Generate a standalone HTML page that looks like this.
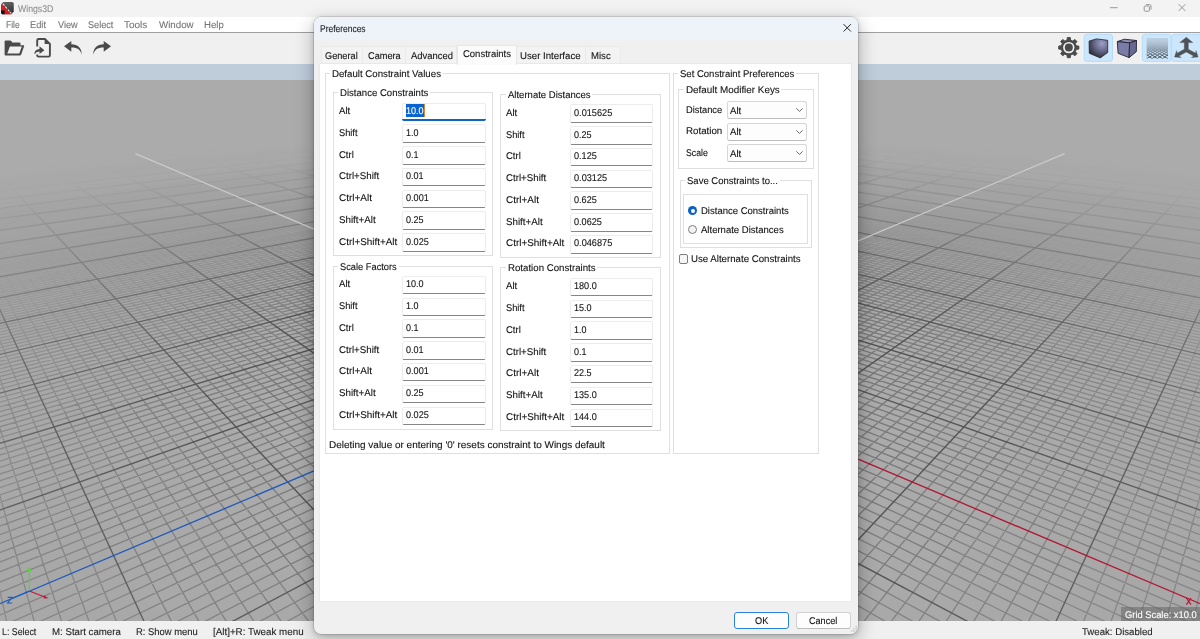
<!DOCTYPE html><html><head><meta charset="utf-8"><title>Wings3D</title><style>
*{box-sizing:border-box;margin:0;padding:0}
html,body{width:1200px;height:639px;overflow:hidden;background:#f0f0f0;font-family:"Liberation Sans",sans-serif;}
.t{position:absolute;white-space:nowrap;transform-origin:0 50%;display:block;-webkit-text-stroke:0.1px currentColor;text-rendering:geometricPrecision}
.abs{position:absolute}
#titlebar{left:0;top:0;width:1200px;height:17px;background:#f3f3f3}
#menubar{left:0;top:17px;width:1200px;height:15.5px;background:#fff}
#menuline{left:0;top:32px;width:1200px;height:1.3px;background:#9f9f9f}
#toolbar{left:0;top:33.3px;width:1200px;height:31px;background:#f0f0f0}
#strip{left:0;top:64px;width:1200px;height:16px;background:#bfccda}
.vp{position:absolute;left:0;top:80px}
#status{left:0;top:621px;width:1200px;height:18px;background:#f0f0f0}
#gscale{left:1121px;top:606.8px;width:79px;height:14.2px;background:rgba(96,96,96,.5)}
#dlg{left:314px;top:17px;width:544.2px;height:616.6px;background:#f0f0f0;border-radius:7px;
 box-shadow:0 0 0 0.6px rgba(90,90,90,.32),0 6px 18px 2px rgba(0,0,0,.24),0 1px 5px rgba(0,0,0,.16);overflow:hidden}
#dtitle{left:0;top:0;width:100%;height:22.5px;background:#eef3fa}
.tab{position:absolute;top:46.4px;height:17.6px;background:#f3f3f3;border:1px solid #eaeaea;border-bottom:none}
.tabsel{position:absolute;top:44.9px;height:19.7px;background:#fbfbfb;border:1px solid #e6e6e6;border-bottom:none}
#pagebox{left:319.2px;top:63px;width:532.6px;height:539px;background:#fff;border:1px solid #e9e9e9}
.gb{position:absolute;border:1px solid #dfdfdf;}
.gl{position:absolute;background:#fff;height:10px}
.in{position:absolute;height:18.6px;width:83.5px;background:#fff;border:1px solid #ececec;border-bottom:1.3px solid #868686;border-radius:2px}
.cb{position:absolute;height:18.2px;width:79.5px;background:#fdfdfd;border:1px solid #d6d6d6;border-bottom-color:#bdbdbd;border-radius:2.5px}
.btn{position:absolute;height:16.5px;border-radius:3px;background:#fdfdfd;border:1px solid #d2d2d2;border-bottom-color:#bbb}
</style></head><body>
<div id="titlebar" class="abs"></div>
<svg class="abs" style="left:0;top:0" width="16" height="16" viewBox="0 0 16 16">
<defs><linearGradient id="ig" x1="0" y1="0" x2="0.3" y2="1"><stop offset="0" stop-color="#6a6a6a"/><stop offset="1" stop-color="#363636"/></linearGradient></defs>
<path d="M3.2 1.9H12.4L13.75 3.3V11.6L11.3 14.25H2.2L1 13V4.6Z" fill="url(#ig)"/>
<path d="M1 4.8L2.7 4.4L5 7.6V8.7H7L7.7 11.8H10L11.6 13.3L11 14.25H4.6V10.6H1Z" fill="#e8151b"/>
<path d="M1 10.6H4.6V14.25H2.2L1 13Z" fill="#141414"/>
<path d="M2.9 3.9l1.5 1.7m.9 1.1l1.6 1.8m1 1.1l1.5 1.7m.8.9l1 1.1" stroke="#e4ecee" stroke-width="1.1" fill="none"/>
</svg>
<span class="t" style="left:18.2px;top:4px;font-size:9.8px;line-height:11px;height:11px;color:#8f8f8f;transform:scaleX(0.8883);">Wings3D</span>
<svg class="abs" style="left:1100px;top:0" width="100" height="17" viewBox="1100 0 100 17" fill="none" stroke="#8d8d8d" stroke-width="0.9">
<path d="M1110 7.7h7.6"/>
<rect x="1144.2" y="6" width="5.2" height="5.2" rx="1"/><path d="M1146 4.6h3.6q1.4 0 1.4 1.4v3.5"/>
<path d="M1178.6 4.2l6.8 6.8m0-6.8l-6.8 6.8"/></svg>
<div id="menubar" class="abs"></div><div id="menuline" class="abs"></div>
<span class="t" style="left:5.5px;top:20px;font-size:9.8px;line-height:11px;height:11px;color:#757575;transform:scaleX(0.8683);">File</span>
<span class="t" style="left:30.3px;top:20px;font-size:9.8px;line-height:11px;height:11px;color:#757575;transform:scaleX(0.9465);">Edit</span>
<span class="t" style="left:57.5px;top:20px;font-size:9.8px;line-height:11px;height:11px;color:#757575;transform:scaleX(0.9350);">View</span>
<span class="t" style="left:88.0px;top:20px;font-size:9.8px;line-height:11px;height:11px;color:#757575;transform:scaleX(0.9286);">Select</span>
<span class="t" style="left:124.2px;top:20px;font-size:9.8px;line-height:11px;height:11px;color:#757575;transform:scaleX(1.0182);">Tools</span>
<span class="t" style="left:158.7px;top:20px;font-size:9.8px;line-height:11px;height:11px;color:#757575;transform:scaleX(0.9917);">Window</span>
<span class="t" style="left:204.3px;top:20px;font-size:9.8px;line-height:11px;height:11px;color:#757575;transform:scaleX(0.9782);">Help</span>
<div id="toolbar" class="abs"></div>
<svg class="abs" style="left:0;top:33px" width="1200" height="31" viewBox="0 33 1200 31">
<defs>
<radialGradient id="c1" gradientUnits="userSpaceOnUse" cx="1102" cy="43.5" r="15"><stop offset="0" stop-color="#a0a0c8"/><stop offset=".45" stop-color="#6d6d90"/><stop offset="1" stop-color="#2b2b36"/></radialGradient>
<linearGradient id="gi" x1="0" y1="0" x2="0" y2="1"><stop offset="0" stop-color="#b9cbdd"/><stop offset=".45" stop-color="#b4c8dc" stop-opacity=".75"/><stop offset="1" stop-color="#c4dcf0" stop-opacity=".2"/></linearGradient>
<linearGradient id="gm" gradientUnits="userSpaceOnUse" x1="0" y1="41" x2="0" y2="59"><stop offset="0" stop-color="#fff" stop-opacity="0"/><stop offset=".3" stop-color="#fff" stop-opacity=".22"/><stop offset="1" stop-color="#fff" stop-opacity="1"/></linearGradient>
<mask id="mm"><rect x="1140" y="34" width="34" height="28" fill="url(#gm)"/></mask>
<clipPath id="gc"><rect x="1146.7" y="38.2" width="21.3" height="20.4"/></clipPath>
</defs>
<g fill="#4a4a4a">
<path fill-rule="evenodd" d="M4.6 41.6q0-1.1 1.1-1.1h4.5q.6 0 1 .5l1.2 1.5h7q1.1 0 1.1 1.1v1.6h2.8q1.2 0 .8 1.1l-2.9 8.2q-.4 1-1.4 1H5.7q-1.1 0-1.1-1.1ZM9.9 46.6L7.3 53.5H19.3L21.8 46.6Z"/>
</g>
<g fill="none" stroke="#4a4a4a" stroke-width="1.9" stroke-linejoin="round">
<path d="M37.2 46.6V40.4q0-1.4 1.4-1.4h6.3l5 5V55.2q0 1.4-1.4 1.4H38.6q-1.4 0-1.4-1.4V54.6"/>
</g>
<path d="M44.6 38.6v5.4h5.4Z" fill="#4a4a4a"/>
<path d="M34.3 54.4q.1-5.2 5.2-5.5V46.3l4.9 3.9-4.9 3.9V51.6q-3.2-.1-5.2 2.8Z" fill="#4a4a4a"/>
<path d="M64 46.3L71.3 40.9V44.3C77.8 44.3 81.9 47.8 81.7 54.9C80.9 50 77.6 47.5 71.3 47.5V51.7Z" fill="#4a4a4a"/>
<path d="M111 46.3L103.7 40.9V44.3C97.2 44.3 93.1 47.8 93.3 54.9C94.1 50 97.4 47.5 103.7 47.5V51.7Z" fill="#4a4a4a"/>
<!-- gear -->
<path d="M1076.29 45.80L1078.89 46.08L1078.89 49.12L1076.29 49.40L1075.37 51.62L1077.00 53.66L1074.86 55.80L1072.82 54.17L1070.60 55.09L1070.32 57.69L1067.28 57.69L1067.00 55.09L1064.78 54.17L1062.74 55.80L1060.60 53.66L1062.23 51.62L1061.31 49.40L1058.71 49.12L1058.71 46.08L1061.31 45.80L1062.23 43.58L1060.60 41.54L1062.74 39.40L1064.78 41.03L1067.00 40.11L1067.28 37.51L1070.32 37.51L1070.60 40.11L1072.82 41.03L1074.86 39.40L1077.00 41.54L1075.37 43.58Z" fill="#4a4a4a" stroke="#4a4a4a" stroke-width="0.9" stroke-linejoin="round"/>
<circle cx="1068.8" cy="47.6" r="5.7" fill="#f0f0f0"/><circle cx="1068.8" cy="47.6" r="4.0" fill="#4a4a4a"/>
<!-- selected backgrounds -->
<g fill="#cce6fb" stroke="#b2dafa" stroke-width="0.9">
<rect x="1084.2" y="34.3" width="28.3" height="27.1" rx="2.5"/>
<rect x="1142.3" y="34.3" width="28.8" height="27.1" rx="2.5"/>
<rect x="1171.6" y="34.3" width="30" height="27.1" rx="2.5"/>
</g>
<!-- smooth cube -->
<path d="M1089.1 41.1L1096.5 38.9L1107.7 40.3L1107.7 52.5L1100.3 57.9L1089.3 53.3Z" fill="url(#c1)" stroke="#24242d" stroke-width="0.8" stroke-linejoin="round"/>
<!-- flat cube -->
<g stroke="#24242e" stroke-width="0.9" stroke-linejoin="round">
<path d="M1117.3 41.6L1124.3 39.2L1136.5 40.5L1129.6 42.9Z" fill="#8b8bb6"/>
<path d="M1117.3 41.6L1129.6 42.9L1129.1 57.6L1118.1 53.3Z" fill="#7b7ba7"/>
<path d="M1129.6 42.9L1136.5 40.5L1136.3 51.7L1129.1 57.6Z" fill="#686890"/>
</g>
<!-- grid icon -->
<rect x="1146.7" y="38.2" width="21.3" height="20.4" fill="url(#gi)"/>
<g clip-path="url(#gc)"><path d="M1174.8 27.7L1486.6 61.1M1140.2 27.8L833.6 61.1M1174.4 27.8L1481.0 61.1M1140.6 27.9L839.2 61.1M1174.0 27.9L1475.4 61.1M1140.9 28.0L844.9 61.1M1173.7 28.0L1469.7 61.1M1141.3 28.1L850.5 61.1M1173.3 28.1L1464.1 61.1M1141.7 28.1L856.1 61.1M1172.9 28.1L1458.5 61.1M1142.1 28.2L861.7 61.1M1172.5 28.2L1452.9 61.1M1142.5 28.3L867.3 61.1M1172.1 28.3L1447.3 61.1M1143.0 28.4L872.9 61.1M1171.6 28.4L1441.7 61.1M1143.4 28.5L878.6 61.1M1171.2 28.5L1436.0 61.1M1143.8 28.6L884.2 61.1M1170.8 28.6L1430.4 61.1M1144.3 28.7L889.8 61.1M1170.3 28.7L1424.8 61.1M1144.7 28.8L895.4 61.1M1169.9 28.8L1419.2 61.1M1145.2 28.9L901.0 61.1M1169.4 28.9L1413.6 61.1M1145.7 29.0L906.6 61.1M1168.9 29.0L1408.0 61.1M1146.2 29.1L912.3 61.1M1168.4 29.1L1402.3 61.1M1146.7 29.2L917.9 61.1M1167.9 29.2L1396.7 61.1M1147.2 29.3L923.5 61.1M1167.4 29.3L1391.1 61.1M1147.7 29.4L929.1 61.1M1166.9 29.4L1385.5 61.1M1148.2 29.5L934.7 61.1M1166.4 29.5L1379.9 61.1M1148.8 29.6L940.3 61.1M1165.8 29.6L1374.3 61.1M1149.3 29.7L946.0 61.1M1165.3 29.7L1368.6 61.1M1149.9 29.8L951.6 61.1M1164.7 29.8L1363.0 61.1M1150.5 29.9L957.2 61.1M1164.1 29.9L1357.4 61.1M1151.1 30.1L962.8 61.1M1163.5 30.1L1351.8 61.1M1151.7 30.2L968.4 61.1M1162.9 30.2L1346.2 61.1M1152.4 30.3L974.0 61.1M1162.2 30.3L1340.6 61.1M1153.0 30.5L979.7 61.1M1161.6 30.5L1334.9 61.1M1153.7 30.6L985.3 61.1M1160.9 30.6L1329.3 61.1M1154.4 30.7L990.9 61.1M1160.2 30.7L1323.7 61.1M1155.1 30.9L996.5 61.1M1159.5 30.9L1318.1 61.1M1155.8 31.0L1002.1 61.1M1158.8 31.0L1312.5 61.1M1156.5 31.2L1007.7 61.1M1158.1 31.2L1306.9 61.1M1157.3 31.4L1013.4 61.1M1157.3 31.4L1301.2 61.1M1158.1 31.5L1019.0 61.1M1156.5 31.5L1295.6 61.1M1158.9 31.7L1024.6 61.1M1155.7 31.7L1290.0 61.1M1159.7 31.9L1030.2 61.1M1154.9 31.9L1284.4 61.1M1160.6 32.0L1035.8 61.1M1154.0 32.0L1278.8 61.1M1161.5 32.2L1041.4 61.1M1153.1 32.2L1273.2 61.1M1162.4 32.4L1047.1 61.1M1152.2 32.4L1267.5 61.1M1163.3 32.6L1052.7 61.1M1151.3 32.6L1261.9 61.1M1164.3 32.8L1058.3 61.1M1150.3 32.8L1256.3 61.1M1165.3 33.0L1063.9 61.1M1149.3 33.0L1250.7 61.1M1166.3 33.2L1069.5 61.1M1148.3 33.2L1245.1 61.1M1167.4 33.4L1075.2 61.1M1147.2 33.4L1239.4 61.1M1168.5 33.7L1080.8 61.1M1146.1 33.7L1233.8 61.1M1169.7 33.9L1086.4 61.1M1144.9 33.9L1228.2 61.1M1170.8 34.1L1092.0 61.1M1143.8 34.1L1222.6 61.1M1172.1 34.4L1097.6 61.1M1142.5 34.4L1217.0 61.1M1173.3 34.7L1103.2 61.1M1141.3 34.7L1211.4 61.1M1174.7 34.9L1108.9 61.1M1139.9 34.9L1205.7 61.1M1176.0 35.2L1114.5 61.1M1138.6 35.2L1200.1 61.1M1177.5 35.5L1120.1 61.1M1137.1 35.5L1194.5 61.1M1178.9 35.8L1125.7 61.1M1135.7 35.8L1188.9 61.1M1180.5 36.1L1131.3 61.1M1134.1 36.1L1183.3 61.1M1182.1 36.5L1136.9 61.1M1132.5 36.5L1177.7 61.1M1183.7 36.8L1142.6 61.1M1130.9 36.8L1172.0 61.1M1185.5 37.2L1148.2 61.1M1129.1 37.2L1166.4 61.1M1187.3 37.5L1153.8 61.1M1127.3 37.5L1160.8 61.1M1189.2 37.9L1159.4 61.1M1125.4 37.9L1155.2 61.1M1191.2 38.3L1165.0 61.1M1123.4 38.3L1149.6 61.1M1193.3 38.8L1170.6 61.1M1121.3 38.8L1144.0 61.1" fill="none" stroke="#3d434a" stroke-width="1" mask="url(#mm)"/></g>
<!-- axes icon -->
<g fill="#4f5357" stroke="#4f5357" stroke-width="0.4" stroke-linejoin="round">
<path d="M1186.3 37.3L1192.8 42.6H1188.3V49.2L1195.6 53.2L1196 50.7L1198.1 57L1191.4 57.5L1193.7 56L1186.3 52L1178.9 56L1181.2 57.5L1174.5 57L1176.6 50.7L1177 53.2L1184.3 49.2V42.6H1179.8Z"/>
</g>
</svg>
<div id="strip" class="abs"></div>
<svg class="vp" width="1200" height="541" viewBox="0 80 1200 541">
<rect x="0" y="80" width="1200" height="541" fill="#ababab"/>
<path d="M601.5 108.0L-4.0 161.3M598.5 108.0L1204.0 161.3M603.0 108.2L-4.0 161.8M597.0 108.2L1204.0 161.8M604.6 108.3L-4.0 162.3M595.4 108.3L1204.0 162.3M606.1 108.4L-4.0 162.8M593.9 108.4L1204.0 162.8M607.6 108.6L-4.0 163.3M592.4 108.6L1204.0 163.3M609.2 108.7L-4.0 163.8M590.8 108.7L1204.0 163.8M610.7 108.9L-4.0 164.3M589.3 108.9L1204.0 164.3M612.3 109.0L-4.0 164.9M587.7 109.0L1204.0 164.9M613.8 109.1L-4.0 165.4M586.2 109.1L1204.0 165.4M617.0 109.4L-4.0 166.4M583.0 109.4L1204.0 166.4M618.6 109.5L-4.0 167.0M581.4 109.5L1204.0 167.0M620.1 109.7L-4.0 167.5M579.9 109.7L1204.0 167.5M621.7 109.8L-4.0 168.1M578.3 109.8L1204.0 168.1M623.3 110.0L-4.0 168.6M576.7 110.0L1204.0 168.6M625.0 110.1L-4.0 169.2M575.0 110.1L1204.0 169.2M626.6 110.2L-4.0 169.7M573.4 110.2L1204.0 169.7M628.2 110.4L-4.0 170.3M571.8 110.4L1204.0 170.3M629.8 110.5L-4.0 170.9M570.2 110.5L1204.0 170.9M633.1 110.8L-4.0 172.0M566.9 110.8L1204.0 172.0M634.8 111.0L-4.0 172.6M565.2 111.0L1204.0 172.6M636.4 111.1L-4.0 173.2M563.6 111.1L1204.0 173.2M638.1 111.3L-4.0 173.8M561.9 111.3L1204.0 173.8M639.8 111.4L-4.0 174.4M560.2 111.4L1204.0 174.4M641.4 111.5L-4.0 175.0M558.6 111.5L1204.0 175.0M643.1 111.7L-4.0 175.6M556.9 111.7L1204.0 175.6M644.8 111.8L-4.0 176.2M555.2 111.8L1204.0 176.2M646.5 112.0L-4.0 176.9M553.5 112.0L1204.0 176.9M650.0 112.3L-4.0 178.1M550.0 112.3L1204.0 178.1M651.7 112.4L-4.0 178.8M548.3 112.4L1204.0 178.8M653.4 112.6L-4.0 179.4M546.6 112.6L1204.0 179.4M655.2 112.7L-4.0 180.1M544.8 112.7L1204.0 180.1M656.9 112.9L-4.0 180.7M543.1 112.9L1204.0 180.7M658.7 113.1L-4.0 181.4M541.3 113.1L1204.0 181.4M660.4 113.2L-4.0 182.1M539.6 113.2L1204.0 182.1M662.2 113.4L-4.0 182.8M537.8 113.4L1204.0 182.8M664.0 113.5L-4.0 183.4M536.0 113.5L1204.0 183.4M667.6 113.8L-4.0 184.8M532.4 113.8L1204.0 184.8M669.4 114.0L-4.0 185.6M530.6 114.0L1204.0 185.6M671.2 114.2L-4.0 186.3M528.8 114.2L1204.0 186.3M673.0 114.3L-4.0 187.0M527.0 114.3L1204.0 187.0M674.9 114.5L-4.0 187.7M525.1 114.5L1204.0 187.7M676.7 114.6L-4.0 188.5M523.3 114.6L1204.0 188.5M678.6 114.8L-4.0 189.2M521.4 114.8L1204.0 189.2M680.4 115.0L-4.0 190.0M519.6 115.0L1204.0 190.0M682.3 115.1L-4.0 190.7M517.7 115.1L1204.0 190.7M686.0 115.5L-4.0 192.3M514.0 115.5L1204.0 192.3M687.9 115.6L-4.0 193.1M512.1 115.6L1204.0 193.1M689.8 115.8L-4.0 193.9M510.2 115.8L1204.0 193.9M691.7 116.0L-4.0 194.7M508.3 116.0L1204.0 194.7M693.7 116.1L-4.0 195.5M506.3 116.1L1204.0 195.5M695.6 116.3L-4.0 196.3M504.4 116.3L1204.0 196.3M697.5 116.5L-4.0 197.1M502.5 116.5L1204.0 197.1M699.5 116.6L-4.0 198.0M500.5 116.6L1204.0 198.0M701.4 116.8L-4.0 198.8M498.6 116.8L1204.0 198.8M705.4 117.1L-4.0 200.5M494.6 117.1L1204.0 200.5M707.3 117.3L-4.0 201.4M492.7 117.3L1204.0 201.4M709.3 117.5L-4.0 202.3M490.7 117.5L1204.0 202.3M711.3 117.7L-4.0 203.2M488.7 117.7L1204.0 203.2M713.4 117.8L-4.0 204.1M486.6 117.8L1204.0 204.1M715.4 118.0L-4.0 205.0M484.6 118.0L1204.0 205.0M717.4 118.2L-4.0 206.0M482.6 118.2L1204.0 206.0M719.4 118.4L-4.0 206.9M480.6 118.4L1204.0 206.9M721.5 118.6L-4.0 207.9M478.5 118.6L1204.0 207.9M725.6 118.9L-4.0 209.8M474.4 118.9L1204.0 209.8M727.7 119.1L-4.0 210.8M472.3 119.1L1204.0 210.8M729.8 119.3L-4.0 211.8M470.2 119.3L1204.0 211.8M731.9 119.5L-4.0 212.8M468.1 119.5L1204.0 212.8M734.0 119.7L-4.0 213.8M466.0 119.7L1204.0 213.8M736.1 119.8L-4.0 214.8M463.9 119.8L1204.0 214.8M738.3 120.0L-4.0 215.9M461.7 120.0L1204.0 215.9M740.4 120.2L-4.0 216.9M459.6 120.2L1204.0 216.9M742.6 120.4L-4.0 218.0M457.4 120.4L1204.0 218.0M746.9 120.8L-4.0 220.2M453.1 120.8L1204.0 220.2M749.1 121.0L-4.0 221.3M450.9 121.0L1204.0 221.3M751.3 121.2L-4.0 222.4M448.7 121.2L1204.0 222.4M753.5 121.4L-4.0 223.6M446.5 121.4L1204.0 223.6M755.7 121.6L-4.0 224.7M444.3 121.6L1204.0 224.7M758.0 121.8L-4.0 225.9M442.0 121.8L1204.0 225.9M760.2 122.0L-4.0 227.1M439.8 122.0L1204.0 227.1M762.5 122.2L-4.0 228.3M437.5 122.2L1204.0 228.3M764.7 122.4L-4.0 229.5M435.3 122.4L1204.0 229.5M769.3 122.8L-4.0 232.0M430.7 122.8L1204.0 232.0M771.6 123.0L-4.0 233.3M428.4 123.0L1204.0 233.3M773.9 123.2L-4.0 234.6M426.1 123.2L1204.0 234.6M776.3 123.4L-4.0 235.9M423.7 123.4L1204.0 235.9M778.6 123.6L-4.0 237.2M421.4 123.6L1204.0 237.2M780.9 123.8L-4.0 238.5M419.1 123.8L1204.0 238.5M783.3 124.0L-4.0 239.9M416.7 124.0L1204.0 239.9M785.7 124.2L-4.0 241.3M414.3 124.2L1204.0 241.3M788.1 124.4L-4.0 242.7M411.9 124.4L1204.0 242.7M792.9 124.8L-4.0 245.5M407.1 124.8L1204.0 245.5M795.3 125.0L-4.0 247.0M404.7 125.0L1204.0 247.0M797.8 125.2L-4.0 248.5M402.2 125.2L1204.0 248.5M800.2 125.5L-4.0 250.0M399.8 125.5L1204.0 250.0M802.7 125.7L-4.0 251.5M397.3 125.7L1204.0 251.5M805.1 125.9L-4.0 253.0M394.9 125.9L1204.0 253.0M807.6 126.1L-4.0 254.6M392.4 126.1L1204.0 254.6M810.1 126.3L-4.0 256.2M389.9 126.3L1204.0 256.2M812.7 126.6L-4.0 257.8M387.3 126.6L1204.0 257.8M817.7 127.0L-4.0 261.1M382.3 127.0L1204.0 261.1M820.3 127.2L-4.0 262.8M379.7 127.2L1204.0 262.8M822.9 127.4L-4.0 264.5M377.1 127.4L1204.0 264.5M825.5 127.7L-4.0 266.3M374.5 127.7L1204.0 266.3M828.1 127.9L-4.0 268.1M371.9 127.9L1204.0 268.1M830.7 128.1L-4.0 269.9M369.3 128.1L1204.0 269.9M833.3 128.4L-4.0 271.7M366.7 128.4L1204.0 271.7M836.0 128.6L-4.0 273.6M364.0 128.6L1204.0 273.6M838.6 128.8L-4.0 275.5M361.4 128.8L1204.0 275.5M844.0 129.3L-4.0 279.4M356.0 129.3L1204.0 279.4M846.7 129.5L-4.0 281.4M353.3 129.5L1204.0 281.4M849.4 129.8L-4.0 283.4M350.6 129.8L1204.0 283.4M852.1 130.0L-4.0 285.5M347.9 130.0L1204.0 285.5M854.9 130.3L-4.0 287.6M345.1 130.3L1204.0 287.6M857.7 130.5L-4.0 289.7M342.3 130.5L1204.0 289.7M860.4 130.7L-4.0 291.9M339.6 130.7L1204.0 291.9M863.2 131.0L-4.0 294.1M336.8 131.0L1204.0 294.1M866.0 131.2L-4.0 296.3M334.0 131.2L1204.0 296.3M871.7 131.7L-4.0 301.0M328.3 131.7L1204.0 301.0M874.6 132.0L-4.0 303.4M325.4 132.0L1204.0 303.4M877.5 132.2L-4.0 305.8M322.5 132.2L1204.0 305.8M880.4 132.5L-4.0 308.2M319.6 132.5L1204.0 308.2M883.3 132.7L-4.0 310.8M316.7 132.7L1204.0 310.8M886.2 133.0L-4.0 313.3M313.8 133.0L1204.0 313.3M889.1 133.3L-4.0 315.9M310.9 133.3L1204.0 315.9M892.1 133.5L-4.0 318.6M307.9 133.5L1204.0 318.6M895.1 133.8L-4.0 321.3M304.9 133.8L1204.0 321.3M901.1 134.3L-4.0 326.9M298.9 134.3L1204.0 326.9M904.1 134.6L-4.0 329.8M295.9 134.6L1204.0 329.8M907.2 134.8L-4.0 332.8M292.8 134.8L1204.0 332.8M910.3 135.1L-4.0 335.8M289.7 135.1L1204.0 335.8M913.3 135.4L-4.0 338.9M286.7 135.4L1204.0 338.9M916.5 135.6L-4.0 342.0M283.5 135.6L1204.0 342.0M919.6 135.9L-4.0 345.2M280.4 135.9L1204.0 345.2M922.7 136.2L-4.0 348.5M277.3 136.2L1204.0 348.5M925.9 136.5L-4.0 351.8M274.1 136.5L1204.0 351.8M932.3 137.0L-4.0 358.8M267.7 137.0L1204.0 358.8M935.5 137.3L-4.0 362.4M264.5 137.3L1204.0 362.4M938.7 137.6L-4.0 366.0M261.3 137.6L1204.0 366.0M942.0 137.9L-4.0 369.8M258.0 137.9L1204.0 369.8M945.3 138.2L-4.0 373.6M254.7 138.2L1204.0 373.6M948.6 138.5L-4.0 377.5M251.4 138.5L1204.0 377.5M951.9 138.8L-4.0 381.6M248.1 138.8L1204.0 381.6M955.3 139.0L-4.0 385.7M244.7 139.0L1204.0 385.7M958.6 139.3L-4.0 389.9M241.4 139.3L1204.0 389.9M965.4 139.9L-4.0 398.7M234.6 139.9L1204.0 398.7M968.8 140.2L-4.0 403.2M231.2 140.2L1204.0 403.2M972.3 140.5L-4.0 407.9M227.7 140.5L1204.0 407.9M975.8 140.8L-4.0 412.7M224.2 140.8L1204.0 412.7M979.3 141.2L-4.0 417.7M220.7 141.2L1204.0 417.7M982.8 141.5L-4.0 422.7M217.2 141.5L1204.0 422.7M986.3 141.8L-4.0 427.9M213.7 141.8L1204.0 427.9M989.9 142.1L-4.0 433.3M210.1 142.1L1204.0 433.3M993.4 142.4L-4.0 438.8M206.6 142.4L1204.0 438.8M1000.7 143.0L-4.0 450.2M199.3 143.0L1204.0 450.2M1004.3 143.4L-4.0 456.2M195.7 143.4L1204.0 456.2M1008.0 143.7L-4.0 462.4M192.0 143.7L1204.0 462.4M1011.7 144.0L-4.0 468.7M188.3 144.0L1204.0 468.7M1015.4 144.3L-4.0 475.3M184.6 144.3L1204.0 475.3M1019.2 144.7L-4.0 482.1M180.8 144.7L1204.0 482.1M1023.0 145.0L-4.0 489.0M177.0 145.0L1204.0 489.0M1026.8 145.3L-4.0 496.2M173.2 145.3L1204.0 496.2M1030.6 145.7L-4.0 503.7M169.4 145.7L1204.0 503.7M1038.3 146.3L-4.0 519.3M161.7 146.3L1204.0 519.3M1042.2 146.7L-4.0 527.5M157.8 146.7L1204.0 527.5M1046.2 147.0L-4.0 536.1M153.8 147.0L1204.0 536.1M1050.1 147.4L-4.0 544.9M149.9 147.4L1204.0 544.9M1054.1 147.7L-4.0 554.0M145.9 147.7L1204.0 554.0M1058.1 148.1L-4.0 563.5M141.9 148.1L1204.0 563.5M1062.2 148.4L-4.0 573.4M137.8 148.4L1204.0 573.4M1066.2 148.8L-4.0 583.6M133.8 148.8L1204.0 583.6M1070.3 149.1L-4.0 594.2M129.7 149.1L1204.0 594.2M1078.6 149.9L-4.0 616.8M121.4 149.9L1204.0 616.8M1082.8 150.2L4.5 625.0M117.2 150.2L1195.5 625.0M1087.0 150.6L32.2 625.0M113.0 150.6L1167.8 625.0M1091.2 151.0L59.8 625.0M108.8 151.0L1140.2 625.0M1095.5 151.3L87.4 625.0M104.5 151.3L1112.6 625.0M1099.8 151.7L115.1 625.0M100.2 151.7L1084.9 625.0M1104.1 152.1L142.7 625.0M95.9 152.1L1057.3 625.0M1108.5 152.5L170.3 625.0M91.5 152.5L1029.7 625.0M1112.9 152.9L197.9 625.0M87.1 152.9L1002.1 625.0M1121.7 153.6L253.2 625.0M78.3 153.6L946.8 625.0M1126.2 154.0L280.8 625.0M73.8 154.0L919.2 625.0M1130.7 154.4L308.4 625.0M69.3 154.4L891.6 625.0M1135.3 154.8L336.1 625.0M64.7 154.8L863.9 625.0M1139.9 155.2L363.7 625.0M60.1 155.2L836.3 625.0M1144.5 155.6L391.3 625.0M55.5 155.6L808.7 625.0M1149.1 156.0L418.9 625.0M50.9 156.0L781.1 625.0M1153.8 156.5L446.6 625.0M46.2 156.5L753.4 625.0M1158.5 156.9L474.2 625.0M41.5 156.9L725.8 625.0M1168.1 157.7L529.4 625.0M31.9 157.7L670.6 625.0M1172.9 158.1L557.1 625.0M27.1 158.1L642.9 625.0M1177.8 158.6L584.7 625.0M22.2 158.6L615.3 625.0M1182.7 159.0L612.3 625.0M17.3 159.0L587.7 625.0M1187.6 159.4L639.9 625.0M12.4 159.4L560.1 625.0M1192.6 159.9L667.6 625.0M7.4 159.9L532.4 625.0M1197.6 160.3L695.2 625.0M2.4 160.3L504.8 625.0M1202.7 160.7L722.8 625.0M-2.7 160.7L477.2 625.0M1204.0 165.0L750.4 625.0M-4.0 165.0L449.6 625.0M1204.0 177.8L805.7 625.0M-4.0 177.8L394.3 625.0M1204.0 185.4L833.3 625.0M-4.0 185.4L366.7 625.0M1204.0 193.8L861.0 625.0M-4.0 193.8L339.0 625.0M1204.0 203.3L888.6 625.0M-4.0 203.3L311.4 625.0M1204.0 214.1L916.2 625.0M-4.0 214.1L283.8 625.0M1204.0 226.4L943.8 625.0M-4.0 226.4L256.2 625.0M1204.0 240.7L971.5 625.0M-4.0 240.7L228.5 625.0M1204.0 257.5L999.1 625.0M-4.0 257.5L200.9 625.0M1204.0 277.4L1026.7 625.0M-4.0 277.4L173.3 625.0M1204.0 330.8L1082.0 625.0M-4.0 330.8L118.0 625.0M1204.0 367.9L1109.6 625.0M-4.0 367.9L90.4 625.0M1204.0 416.0L1137.2 625.0M-4.0 416.0L62.8 625.0M1204.0 481.0L1164.8 625.0M-4.0 481.0L35.2 625.0M1204.0 573.6L1192.5 625.0M-4.0 573.6L7.5 625.0" stroke="#797979" stroke-width="1.3" fill="none"/>
<g fill="#ababab" fill-rule="evenodd"><path d="M-10 70H1210V640H-10Z M600 259L619 259L638 260L657 261L675 263L694 265L713 268L731 271L749 275L768 279L785 284L803 290L820 296L837 303L853 311L868 320L883 329L896 339L908 350L919 362L928 374L935 388L939 402L941 417L939 433L934 449L926 465L912 482L894 498L872 514L845 529L813 543L776 554L736 564L692 571L647 576L600 577L553 576L508 571L464 564L424 554L387 543L355 529L328 514L306 498L288 482L274 465L266 449L261 433L259 417L261 402L265 388L272 374L281 362L292 350L304 339L317 329L332 320L347 311L363 303L380 296L397 290L415 284L432 279L451 275L469 271L487 268L506 265L525 263L543 261L562 260L581 259Z" fill-opacity="0.069"/><path d="M-10 70H1210V640H-10Z M481 644L424 634L372 619L325 602L286 583L253 561L227 539L208 517L195 495L188 473L185 452L187 432L192 413L201 396L212 379L225 364L240 350L256 338L273 326L292 315L311 306L330 297L350 289L370 282L391 276L412 271L432 266L453 262L474 258L495 255L516 253L537 251L558 250L579 249L600 248L621 249L642 250L663 251L684 253L705 255L726 258L747 262L768 266L788 271L809 276L830 282L850 289L870 297L889 306L908 315L927 326L944 338L960 350L975 364L988 379L999 396L1008 413L1013 432L1015 452L1012 473L1005 495L992 517L973 539L947 561L914 583L875 602L828 619L776 634L719 644Z" fill-opacity="0.069"/><path d="M-10 70H1210V640H-10Z M191 644L155 614L129 583L112 552L103 522L100 494L103 467L111 442L123 420L137 399L155 379L174 362L194 346L215 332L238 319L260 308L284 297L307 288L331 280L354 272L378 266L401 260L425 255L449 251L472 248L495 245L519 243L542 241L565 240L588 239L612 239L635 240L658 241L681 243L705 245L728 248L751 251L775 255L799 260L822 266L846 272L869 280L893 288L916 297L940 308L962 319L985 332L1006 346L1026 362L1045 379L1063 399L1077 420L1089 442L1097 467L1100 494L1097 522L1088 552L1071 583L1045 614L1009 644Z" fill-opacity="0.069"/><path d="M-10 70H1210V640H-10Z M17 644L3 603L-2 564L1 528L11 494L25 464L43 436L64 411L87 388L112 368L137 350L163 334L190 320L217 307L243 295L270 285L296 276L323 268L349 261L375 255L400 250L426 245L451 241L476 238L501 235L526 233L551 232L575 231L600 231L625 231L649 232L674 233L699 235L724 238L749 241L774 245L800 250L825 255L851 261L877 268L904 276L930 285L957 295L983 307L1010 320L1037 334L1063 350L1088 368L1113 388L1136 411L1157 436L1175 464L1189 494L1199 528L1202 564L1197 603L1183 644Z" fill-opacity="0.069"/><path d="M-10 70H1210V640H-10Z M-130 644L-122 593L-106 548L-84 507L-58 471L-29 439L2 410L33 385L65 363L97 343L129 326L161 311L192 298L223 286L254 276L283 266L313 258L342 251L370 245L398 240L426 236L453 232L480 229L507 227L534 225L560 224L587 223L613 223L640 224L666 225L693 227L720 229L747 232L774 236L802 240L830 245L858 251L887 258L917 266L946 276L977 286L1008 298L1039 311L1071 326L1103 343L1135 363L1167 385L1198 410L1229 439L1258 471L1284 507L1306 548L1322 593L1330 644Z" fill-opacity="0.069"/><path d="M-10 70H1210V640H-10Z M-265 644L-232 585L-195 534L-155 490L-114 452L-73 419L-33 390L8 365L47 344L85 325L122 308L158 294L193 281L227 270L260 261L293 252L324 245L355 239L385 233L415 229L444 225L473 222L502 220L530 218L558 217L586 216L614 216L642 217L670 218L698 220L727 222L756 225L785 229L815 233L845 239L876 245L907 252L940 261L973 270L1007 281L1042 294L1078 308L1115 325L1153 344L1192 365L1233 390L1273 419L1314 452L1355 490L1395 534L1432 585L1465 644Z" fill-opacity="0.069"/><path d="M-10 70H1210V640H-10Z M-391 644L-333 578L-275 523L-219 477L-166 437L-114 404L-65 375L-17 350L28 329L70 311L112 295L151 281L189 269L225 259L261 250L295 242L328 235L360 229L392 224L423 220L453 217L483 214L512 212L542 211L571 210L600 209L629 210L658 211L688 212L717 214L747 217L777 220L808 224L840 229L872 235L905 242L939 250L975 259L1011 269L1049 281L1088 295L1130 311L1172 329L1217 350L1265 375L1314 404L1366 437L1419 477L1475 523L1533 578L1591 644Z" fill-opacity="0.069"/><path d="M-10 70H1210V640H-10Z M-512 644L-425 571L-346 511L-273 461L-205 421L-143 386L-85 358L-31 333L20 313L68 295L113 280L155 267L196 256L235 246L273 237L309 230L344 224L378 219L411 215L444 211L476 208L507 206L538 204L569 204L600 203L631 204L662 204L693 206L724 208L756 211L789 215L822 219L856 224L891 230L927 237L965 246L1004 256L1045 267L1087 280L1132 295L1180 313L1231 333L1285 358L1343 386L1405 421L1473 461L1546 511L1625 571L1712 644Z" fill-opacity="0.069"/><path d="M-10 70H1210V640H-10Z M-629 644L-514 564L-413 500L-324 449L-245 408L-173 373L-107 345L-47 321L8 301L60 283L108 269L153 256L196 245L237 236L277 228L314 222L351 216L386 211L420 207L454 204L487 201L520 200L552 198L584 198L616 198L648 198L680 200L713 201L746 204L780 207L814 211L849 216L886 222L923 228L963 236L1004 245L1047 256L1092 269L1140 283L1192 301L1247 321L1307 345L1373 373L1445 408L1524 449L1613 500L1714 564L1829 644Z" fill-opacity="0.069"/><path d="M-10 70H1210V640H-10Z M-744 644L-598 557L-475 491L-370 438L-279 395L-198 361L-126 333L-61 309L-1 289L54 273L105 258L153 246L198 236L241 227L282 220L321 214L359 208L395 204L431 200L466 197L500 195L533 194L567 193L600 192L633 193L667 194L700 195L734 197L769 200L805 204L841 208L879 214L918 220L959 227L1002 236L1047 246L1095 258L1146 273L1201 289L1261 309L1326 333L1398 361L1479 395L1570 438L1675 491L1798 557L1944 644Z" fill-opacity="0.069"/><path d="M-10 70H1210V640H-10Z M-857 644L-681 553L-539 483L-420 430L-318 387L-229 353L-151 324L-81 301L-18 282L40 265L94 252L143 240L190 230L234 221L276 214L316 208L355 203L392 199L428 195L463 192L498 190L532 189L566 188L600 187L634 188L668 189L702 190L737 192L772 195L808 199L845 203L884 208L924 214L966 221L1010 230L1057 240L1106 252L1160 265L1218 282L1281 301L1351 324L1429 353L1518 387L1620 430L1739 483L1881 553L2057 644Z" fill-opacity="0.069"/><path d="M-10 70H1210V640H-10Z M-968 644L-758 546L-593 474L-458 419L-345 376L-249 341L-165 314L-90 291L-23 272L38 256L94 242L146 231L194 222L240 214L283 207L325 201L364 196L403 192L440 189L476 187L512 185L547 184L583 183L617 183L653 184L688 185L724 187L760 189L797 192L836 196L875 201L917 207L960 214L1006 222L1054 231L1106 242L1162 256L1223 272L1290 291L1365 314L1449 341L1545 376L1658 419L1793 474L1958 546L2168 644Z" fill-opacity="0.069"/><path d="M-10 70H1210V640H-10Z M-1078 644L-836 542L-651 468L-502 412L-380 368L-276 334L-186 306L-108 284L-37 265L26 250L84 237L137 226L187 216L234 208L278 202L320 196L361 191L400 188L438 185L475 182L511 180L547 179L582 179L618 179L653 179L689 180L725 182L762 185L800 188L839 191L880 196L922 202L966 208L1013 216L1063 226L1116 237L1174 250L1237 265L1308 284L1386 306L1476 334L1580 368L1702 412L1851 468L2036 542L2278 644Z" fill-opacity="0.069"/><path d="M-10 70H1210V640H-10Z M-1187 644L-907 535L-698 458L-534 401L-401 358L-290 324L-195 296L-112 274L-39 256L27 241L87 228L143 218L194 209L242 201L287 195L331 190L372 186L412 182L451 179L489 177L526 176L563 175L600 174L637 175L674 176L711 177L749 179L788 182L828 186L869 190L913 195L958 201L1006 209L1057 218L1113 228L1173 241L1239 256L1312 274L1395 296L1490 324L1601 358L1734 401L1898 458L2107 535L2387 644Z" fill-opacity="0.069"/><path d="M-10 70H1210V640H-10Z M-1294 644L-980 531L-751 452L-574 395L-432 351L-314 317L-214 290L-128 268L-51 250L17 236L79 223L135 213L188 204L237 197L283 191L327 186L369 181L410 178L449 175L488 173L526 172L563 171L600 171L637 171L674 172L712 173L751 175L790 178L831 181L873 186L917 191L963 197L1012 204L1065 213L1121 223L1183 236L1251 250L1328 268L1414 290L1514 317L1632 351L1774 395L1951 452L2180 531L2494 644Z" fill-opacity="0.069"/><path d="M-10 70H1210V640H-10Z M-1402 644L-1046 525L-792 443L-600 385L-448 341L-324 308L-219 281L-129 260L-50 242L21 228L84 216L142 206L196 198L247 191L294 185L339 180L382 176L424 173L464 171L503 169L542 168L581 167L619 167L658 168L697 169L736 171L776 173L818 176L861 180L906 185L953 191L1004 198L1058 206L1116 216L1179 228L1250 242L1329 260L1419 281L1524 308L1648 341L1800 385L1992 443L2246 525L2602 644Z" fill-opacity="0.069"/><path d="M-10 70H1210V640H-10Z M-1508 644L-1115 521L-841 438L-636 379L-475 335L-345 302L-236 275L-142 254L-61 237L12 223L77 211L136 202L191 194L242 187L290 181L336 176L380 173L422 170L463 167L502 165L542 164L581 164L619 164L658 164L698 165L737 167L778 170L820 173L864 176L910 181L958 187L1009 194L1064 202L1123 211L1188 223L1261 237L1342 254L1436 275L1545 302L1675 335L1836 379L2041 438L2315 521L2708 644Z" fill-opacity="0.069"/><path d="M-10 70H1210V640H-10Z M-1614 644L-1175 514L-876 429L-657 370L-487 326L-350 293L-237 267L-140 246L-56 229L18 216L85 205L145 195L201 188L254 181L303 176L349 171L394 168L437 165L479 163L520 162L560 161L600 160L640 161L680 162L721 163L763 165L806 168L851 171L897 176L946 181L999 188L1055 195L1115 205L1182 216L1256 229L1340 246L1437 267L1550 293L1687 326L1857 370L2076 429L2375 514L2814 644Z" fill-opacity="0.069"/><path d="M-10 70H1210V640H-10Z M-1720 644L-1242 510L-922 424L-689 364L-511 320L-369 287L-252 262L-152 241L-66 225L10 212L78 201L140 192L197 184L250 178L300 172L347 168L392 165L435 162L477 160L519 159L560 158L600 157L640 158L681 159L723 160L765 162L808 165L853 168L900 172L950 178L1003 184L1060 192L1122 201L1190 212L1266 225L1352 241L1452 262L1569 287L1711 320L1889 364L2122 424L2442 510L2920 644Z" fill-opacity="0.162"/><path d="M-10 70H1210V640H-10Z M-1825 644L-1307 506L-965 419L-721 359L-535 315L-387 282L-266 257L-163 237L-75 221L2 208L72 197L135 188L193 180L246 174L297 169L344 165L390 162L434 159L476 157L518 156L559 155L600 155L641 155L682 156L724 157L766 159L810 162L856 165L903 169L954 174L1007 180L1065 188L1128 197L1198 208L1275 221L1363 237L1466 257L1587 282L1735 315L1921 359L2165 419L2507 506L3025 644Z" fill-opacity="0.172"/><path d="M-10 70H1210V640H-10Z M-1930 644L-1370 502L-1008 414L-751 353L-557 310L-404 277L-279 252L-174 233L-84 217L-5 204L66 193L130 184L189 177L243 171L294 166L342 162L388 159L432 156L475 154L517 153L559 152L600 152L641 152L683 153L725 154L768 156L812 159L858 162L906 166L957 171L1011 177L1070 184L1134 193L1205 204L1284 217L1374 233L1479 252L1604 277L1757 310L1951 353L2208 414L2570 502L3130 644Z" fill-opacity="0.185"/><path d="M-10 70H1210V640H-10Z M-2034 644L-1421 496L-1034 405L-763 345L-562 301L-404 269L-275 245L-168 226L-76 210L5 198L77 187L142 179L201 172L256 166L308 162L357 158L404 155L449 153L493 151L536 150L579 149L621 149L664 150L707 151L751 153L796 155L843 158L892 162L944 166L999 172L1058 179L1123 187L1195 198L1276 210L1368 226L1475 245L1604 269L1762 301L1963 345L2234 405L2621 496L3234 644Z" fill-opacity="0.202"/><path d="M-10 70H1210V640H-10Z M-2139 644L-1482 492L-1073 401L-791 340L-582 297L-419 265L-287 241L-177 222L-83 207L-1 194L72 184L138 176L198 169L254 164L306 159L355 155L403 152L448 150L492 148L536 147L579 147L621 147L664 147L708 148L752 150L797 152L845 155L894 159L946 164L1002 169L1062 176L1128 184L1201 194L1283 207L1377 222L1487 241L1619 265L1782 297L1991 340L2273 401L2682 492L3339 644Z" fill-opacity="0.224"/><path d="M-10 70H1210V640H-10Z M-2243 644L-1542 489L-1112 396L-818 335L-601 292L-434 261L-299 237L-186 218L-91 203L-7 191L67 181L134 173L194 166L251 161L304 156L353 153L401 150L447 148L492 146L535 145L578 144L622 144L665 145L708 146L753 148L799 150L847 153L896 156L949 161L1006 166L1066 173L1133 181L1207 191L1291 203L1386 218L1499 237L1634 261L1801 292L2018 335L2312 396L2742 489L3443 644Z" fill-opacity="0.255"/><path d="M-10 70H1210V640H-10Z M-2346 644L-1600 485L-1149 392L-843 331L-620 288L-448 257L-310 233L-195 214L-98 200L-13 188L62 178L130 170L191 164L248 158L301 154L352 150L400 147L446 145L491 144L535 143L578 142L622 142L665 143L709 144L754 145L800 147L848 150L899 154L952 158L1009 164L1070 170L1138 178L1213 188L1298 200L1395 214L1510 233L1648 257L1820 288L2043 331L2349 392L2800 485L3546 644Z" fill-opacity="0.302"/><path d="M-10 70H1210V640H-10Z M-2450 644L-1658 481L-1185 387L-868 326L-638 284L-462 253L-320 229L-203 211L-104 196L-18 185L58 175L126 167L188 161L246 156L299 151L350 148L398 145L445 143L490 141L534 140L578 140L622 140L666 140L710 141L755 143L802 145L850 148L901 151L954 156L1012 161L1074 167L1142 175L1218 185L1304 196L1403 211L1520 229L1662 253L1838 284L2068 326L2385 387L2858 481L3650 644Z" fill-opacity="0.379"/><path d="M-10 70H1210V640H-10Z M-2553 644L-1699 475L-1201 379L-872 318L-635 276L-455 246L-311 223L-193 205L-92 191L-6 180L71 171L140 163L203 157L261 152L316 148L367 145L416 142L464 140L510 139L555 138L600 138L645 138L690 139L736 140L784 142L833 145L884 148L939 152L997 157L1060 163L1129 171L1206 180L1292 191L1393 205L1511 223L1655 246L1835 276L2072 318L2401 379L2899 475L3753 644Z" fill-opacity="0.534"/><path d="M-10 70H1210V640H-10Z M-2657 644L-1753 472L-1235 375L-895 314L-652 272L-467 242L-321 219L-200 202L-98 188L-10 177L67 168L137 161L201 155L259 150L314 146L366 143L415 140L463 138L509 137L555 136L600 136L645 136L691 137L737 138L785 140L834 143L886 146L941 150L999 155L1063 161L1133 168L1210 177L1298 188L1400 202L1521 219L1667 242L1852 272L2095 314L2435 375L2953 472L3857 644Z" fill-opacity="1.000"/></g>
<path d="M600.0 107.9L-4.0 160.9M600.0 107.9L1204.0 160.9M615.4 109.3L-4.0 165.9M584.6 109.3L1204.0 165.9M631.5 110.7L-4.0 171.4M568.5 110.7L1204.0 171.4M648.2 112.1L-4.0 177.5M551.8 112.1L1204.0 177.5M665.8 113.7L-4.0 184.1M534.2 113.7L1204.0 184.1M684.1 115.3L-4.0 191.5M515.9 115.3L1204.0 191.5M703.4 117.0L-4.0 199.7M496.6 117.0L1204.0 199.7M723.6 118.7L-4.0 208.8M476.4 118.7L1204.0 208.8M744.7 120.6L-4.0 219.1M455.3 120.6L1204.0 219.1M767.0 122.6L-4.0 230.8M433.0 122.6L1204.0 230.8M790.5 124.6L-4.0 244.1M409.5 124.6L1204.0 244.1M815.2 126.8L-4.0 259.5M384.8 126.8L1204.0 259.5M841.3 129.1L-4.0 277.4M358.7 129.1L1204.0 277.4M868.9 131.5L-4.0 298.6M331.1 131.5L1204.0 298.6M898.1 134.0L-4.0 324.1M301.9 134.0L1204.0 324.1M929.1 136.8L-4.0 355.3M270.9 136.8L1204.0 355.3M962.0 139.6L-4.0 394.2M238.0 139.6L1204.0 394.2M997.1 142.7L-4.0 444.4M202.9 142.7L1204.0 444.4M1034.5 146.0L-4.0 511.4M165.5 146.0L1204.0 511.4M1117.3 153.3L225.6 625.0M82.7 153.3L974.4 625.0M1163.3 157.3L501.8 625.0M36.7 157.3L698.2 625.0M1204.0 171.1L778.1 625.0M-4.0 171.1L421.9 625.0M1204.0 301.3L1054.3 625.0M-4.0 301.3L145.7 625.0" stroke="#545454" stroke-width="1.4" fill="none"/>
<g fill="#ababab" fill-rule="evenodd"><path d="M-10 70H1210V640H-10Z M481 644L424 634L372 619L325 602L286 583L253 561L227 539L208 517L195 495L188 473L185 452L187 432L192 413L201 396L212 379L225 364L240 350L256 338L273 326L292 315L311 306L330 297L350 289L370 282L391 276L412 271L432 266L453 262L474 258L495 255L516 253L537 251L558 250L579 249L600 248L621 249L642 250L663 251L684 253L705 255L726 258L747 262L768 266L788 271L809 276L830 282L850 289L870 297L889 306L908 315L927 326L944 338L960 350L975 364L988 379L999 396L1008 413L1013 432L1015 452L1012 473L1005 495L992 517L973 539L947 561L914 583L875 602L828 619L776 634L719 644Z" fill-opacity="0.077"/><path d="M-10 70H1210V640H-10Z M191 644L155 614L129 583L112 552L103 522L100 494L103 467L111 442L123 420L137 399L155 379L174 362L194 346L215 332L238 319L260 308L284 297L307 288L331 280L354 272L378 266L401 260L425 255L449 251L472 248L495 245L519 243L542 241L565 240L588 239L612 239L635 240L658 241L681 243L705 245L728 248L751 251L775 255L799 260L822 266L846 272L869 280L893 288L916 297L940 308L962 319L985 332L1006 346L1026 362L1045 379L1063 399L1077 420L1089 442L1097 467L1100 494L1097 522L1088 552L1071 583L1045 614L1009 644Z" fill-opacity="0.080"/><path d="M-10 70H1210V640H-10Z M17 644L3 603L-2 564L1 528L11 494L25 464L43 436L64 411L87 388L112 368L137 350L163 334L190 320L217 307L243 295L270 285L296 276L323 268L349 261L375 255L400 250L426 245L451 241L476 238L501 235L526 233L551 232L575 231L600 231L625 231L649 232L674 233L699 235L724 238L749 241L774 245L800 250L825 255L851 261L877 268L904 276L930 285L957 295L983 307L1010 320L1037 334L1063 350L1088 368L1113 388L1136 411L1157 436L1175 464L1189 494L1199 528L1202 564L1197 603L1183 644Z" fill-opacity="0.083"/><path d="M-10 70H1210V640H-10Z M-130 644L-122 593L-106 548L-84 507L-58 471L-29 439L2 410L33 385L65 363L97 343L129 326L161 311L192 298L223 286L254 276L283 266L313 258L342 251L370 245L398 240L426 236L453 232L480 229L507 227L534 225L560 224L587 223L613 223L640 224L666 225L693 227L720 229L747 232L774 236L802 240L830 245L858 251L887 258L917 266L946 276L977 286L1008 298L1039 311L1071 326L1103 343L1135 363L1167 385L1198 410L1229 439L1258 471L1284 507L1306 548L1322 593L1330 644Z" fill-opacity="0.086"/><path d="M-10 70H1210V640H-10Z M-265 644L-232 585L-195 534L-155 490L-114 452L-73 419L-33 390L8 365L47 344L85 325L122 308L158 294L193 281L227 270L260 261L293 252L324 245L355 239L385 233L415 229L444 225L473 222L502 220L530 218L558 217L586 216L614 216L642 217L670 218L698 220L727 222L756 225L785 229L815 233L845 239L876 245L907 252L940 261L973 270L1007 281L1042 294L1078 308L1115 325L1153 344L1192 365L1233 390L1273 419L1314 452L1355 490L1395 534L1432 585L1465 644Z" fill-opacity="0.089"/><path d="M-10 70H1210V640H-10Z M-391 644L-333 578L-275 523L-219 477L-166 437L-114 404L-65 375L-17 350L28 329L70 311L112 295L151 281L189 269L225 259L261 250L295 242L328 235L360 229L392 224L423 220L453 217L483 214L512 212L542 211L571 210L600 209L629 210L658 211L688 212L717 214L747 217L777 220L808 224L840 229L872 235L905 242L939 250L975 259L1011 269L1049 281L1088 295L1130 311L1172 329L1217 350L1265 375L1314 404L1366 437L1419 477L1475 523L1533 578L1591 644Z" fill-opacity="0.093"/><path d="M-10 70H1210V640H-10Z M-512 644L-425 571L-346 511L-273 461L-205 421L-143 386L-85 358L-31 333L20 313L68 295L113 280L155 267L196 256L235 246L273 237L309 230L344 224L378 219L411 215L444 211L476 208L507 206L538 204L569 204L600 203L631 204L662 204L693 206L724 208L756 211L789 215L822 219L856 224L891 230L927 237L965 246L1004 256L1045 267L1087 280L1132 295L1180 313L1231 333L1285 358L1343 386L1405 421L1473 461L1546 511L1625 571L1712 644Z" fill-opacity="0.097"/><path d="M-10 70H1210V640H-10Z M-629 644L-514 564L-413 500L-324 449L-245 408L-173 373L-107 345L-47 321L8 301L60 283L108 269L153 256L196 245L237 236L277 228L314 222L351 216L386 211L420 207L454 204L487 201L520 200L552 198L584 198L616 198L648 198L680 200L713 201L746 204L780 207L814 211L849 216L886 222L923 228L963 236L1004 245L1047 256L1092 269L1140 283L1192 301L1247 321L1307 345L1373 373L1445 408L1524 449L1613 500L1714 564L1829 644Z" fill-opacity="0.102"/><path d="M-10 70H1210V640H-10Z M-744 644L-598 557L-475 491L-370 438L-279 395L-198 361L-126 333L-61 309L-1 289L54 273L105 258L153 246L198 236L241 227L282 220L321 214L359 208L395 204L431 200L466 197L500 195L533 194L567 193L600 192L633 193L667 194L700 195L734 197L769 200L805 204L841 208L879 214L918 220L959 227L1002 236L1047 246L1095 258L1146 273L1201 289L1261 309L1326 333L1398 361L1479 395L1570 438L1675 491L1798 557L1944 644Z" fill-opacity="0.107"/><path d="M-10 70H1210V640H-10Z M-857 644L-681 553L-539 483L-420 430L-318 387L-229 353L-151 324L-81 301L-18 282L40 265L94 252L143 240L190 230L234 221L276 214L316 208L355 203L392 199L428 195L463 192L498 190L532 189L566 188L600 187L634 188L668 189L702 190L737 192L772 195L808 199L845 203L884 208L924 214L966 221L1010 230L1057 240L1106 252L1160 265L1218 282L1281 301L1351 324L1429 353L1518 387L1620 430L1739 483L1881 553L2057 644Z" fill-opacity="0.112"/><path d="M-10 70H1210V640H-10Z M-968 644L-758 546L-593 474L-458 419L-345 376L-249 341L-165 314L-90 291L-23 272L38 256L94 242L146 231L194 222L240 214L283 207L325 201L364 196L403 192L440 189L476 187L512 185L547 184L583 183L617 183L653 184L688 185L724 187L760 189L797 192L836 196L875 201L917 207L960 214L1006 222L1054 231L1106 242L1162 256L1223 272L1290 291L1365 314L1449 341L1545 376L1658 419L1793 474L1958 546L2168 644Z" fill-opacity="0.118"/><path d="M-10 70H1210V640H-10Z M-1078 644L-836 542L-651 468L-502 412L-380 368L-276 334L-186 306L-108 284L-37 265L26 250L84 237L137 226L187 216L234 208L278 202L320 196L361 191L400 188L438 185L475 182L511 180L547 179L582 179L618 179L653 179L689 180L725 182L762 185L800 188L839 191L880 196L922 202L966 208L1013 216L1063 226L1116 237L1174 250L1237 265L1308 284L1386 306L1476 334L1580 368L1702 412L1851 468L2036 542L2278 644Z" fill-opacity="0.125"/><path d="M-10 70H1210V640H-10Z M-1187 644L-907 535L-698 458L-534 401L-401 358L-290 324L-195 296L-112 274L-39 256L27 241L87 228L143 218L194 209L242 201L287 195L331 190L372 186L412 182L451 179L489 177L526 176L563 175L600 174L637 175L674 176L711 177L749 179L788 182L828 186L869 190L913 195L958 201L1006 209L1057 218L1113 228L1173 241L1239 256L1312 274L1395 296L1490 324L1601 358L1734 401L1898 458L2107 535L2387 644Z" fill-opacity="0.132"/><path d="M-10 70H1210V640H-10Z M-1294 644L-980 531L-751 452L-574 395L-432 351L-314 317L-214 290L-128 268L-51 250L17 236L79 223L135 213L188 204L237 197L283 191L327 186L369 181L410 178L449 175L488 173L526 172L563 171L600 171L637 171L674 172L712 173L751 175L790 178L831 181L873 186L917 191L963 197L1012 204L1065 213L1121 223L1183 236L1251 250L1328 268L1414 290L1514 317L1632 351L1774 395L1951 452L2180 531L2494 644Z" fill-opacity="0.141"/><path d="M-10 70H1210V640H-10Z M-1402 644L-1046 525L-792 443L-600 385L-448 341L-324 308L-219 281L-129 260L-50 242L21 228L84 216L142 206L196 198L247 191L294 185L339 180L382 176L424 173L464 171L503 169L542 168L581 167L619 167L658 168L697 169L736 171L776 173L818 176L861 180L906 185L953 191L1004 198L1058 206L1116 216L1179 228L1250 242L1329 260L1419 281L1524 308L1648 341L1800 385L1992 443L2246 525L2602 644Z" fill-opacity="0.150"/><path d="M-10 70H1210V640H-10Z M-1508 644L-1115 521L-841 438L-636 379L-475 335L-345 302L-236 275L-142 254L-61 237L12 223L77 211L136 202L191 194L242 187L290 181L336 176L380 173L422 170L463 167L502 165L542 164L581 164L619 164L658 164L698 165L737 167L778 170L820 173L864 176L910 181L958 187L1009 194L1064 202L1123 211L1188 223L1261 237L1342 254L1436 275L1545 302L1675 335L1836 379L2041 438L2315 521L2708 644Z" fill-opacity="0.161"/><path d="M-10 70H1210V640H-10Z M-1614 644L-1175 514L-876 429L-657 370L-487 326L-350 293L-237 267L-140 246L-56 229L18 216L85 205L145 195L201 188L254 181L303 176L349 171L394 168L437 165L479 163L520 162L560 161L600 160L640 161L680 162L721 163L763 165L806 168L851 171L897 176L946 181L999 188L1055 195L1115 205L1182 216L1256 229L1340 246L1437 267L1550 293L1687 326L1857 370L2076 429L2375 514L2814 644Z" fill-opacity="0.174"/><path d="M-10 70H1210V640H-10Z M-1720 644L-1242 510L-922 424L-689 364L-511 320L-369 287L-252 262L-152 241L-66 225L10 212L78 201L140 192L197 184L250 178L300 172L347 168L392 165L435 162L477 160L519 159L560 158L600 157L640 158L681 159L723 160L765 162L808 165L853 168L900 172L950 178L1003 184L1060 192L1122 201L1190 212L1266 225L1352 241L1452 262L1569 287L1711 320L1889 364L2122 424L2442 510L2920 644Z" fill-opacity="0.189"/><path d="M-10 70H1210V640H-10Z M-1825 644L-1307 506L-965 419L-721 359L-535 315L-387 282L-266 257L-163 237L-75 221L2 208L72 197L135 188L193 180L246 174L297 169L344 165L390 162L434 159L476 157L518 156L559 155L600 155L641 155L682 156L724 157L766 159L810 162L856 165L903 169L954 174L1007 180L1065 188L1128 197L1198 208L1275 221L1363 237L1466 257L1587 282L1735 315L1921 359L2165 419L2507 506L3025 644Z" fill-opacity="0.207"/><path d="M-10 70H1210V640H-10Z M-1930 644L-1370 502L-1008 414L-751 353L-557 310L-404 277L-279 252L-174 233L-84 217L-5 204L66 193L130 184L189 177L243 171L294 166L342 162L388 159L432 156L475 154L517 153L559 152L600 152L641 152L683 153L725 154L768 156L812 159L858 162L906 166L957 171L1011 177L1070 184L1134 193L1205 204L1284 217L1374 233L1479 252L1604 277L1757 310L1951 353L2208 414L2570 502L3130 644Z" fill-opacity="0.228"/><path d="M-10 70H1210V640H-10Z M-2034 644L-1421 496L-1034 405L-763 345L-562 301L-404 269L-275 245L-168 226L-76 210L5 198L77 187L142 179L201 172L256 166L308 162L357 158L404 155L449 153L493 151L536 150L579 149L621 149L664 150L707 151L751 153L796 155L843 158L892 162L944 166L999 172L1058 179L1123 187L1195 198L1276 210L1368 226L1475 245L1604 269L1762 301L1963 345L2234 405L2621 496L3234 644Z" fill-opacity="0.255"/><path d="M-10 70H1210V640H-10Z M-2139 644L-1482 492L-1073 401L-791 340L-582 297L-419 265L-287 241L-177 222L-83 207L-1 194L72 184L138 176L198 169L254 164L306 159L355 155L403 152L448 150L492 148L536 147L579 147L621 147L664 147L708 148L752 150L797 152L845 155L894 159L946 164L1002 169L1062 176L1128 184L1201 194L1283 207L1377 222L1487 241L1619 265L1782 297L1991 340L2273 401L2682 492L3339 644Z" fill-opacity="0.288"/><path d="M-10 70H1210V640H-10Z M-2243 644L-1542 489L-1112 396L-818 335L-601 292L-434 261L-299 237L-186 218L-91 203L-7 191L67 181L134 173L194 166L251 161L304 156L353 153L401 150L447 148L492 146L535 145L578 144L622 144L665 145L708 146L753 148L799 150L847 153L896 156L949 161L1006 166L1066 173L1133 181L1207 191L1291 203L1386 218L1499 237L1634 261L1801 292L2018 335L2312 396L2742 489L3443 644Z" fill-opacity="0.330"/><path d="M-10 70H1210V640H-10Z M-2346 644L-1600 485L-1149 392L-843 331L-620 288L-448 257L-310 233L-195 214L-98 200L-13 188L62 178L130 170L191 164L248 158L301 154L352 150L400 147L446 145L491 144L535 143L578 142L622 142L665 143L709 144L754 145L800 147L848 150L899 154L952 158L1009 164L1070 170L1138 178L1213 188L1298 200L1395 214L1510 233L1648 257L1820 288L2043 331L2349 392L2800 485L3546 644Z" fill-opacity="0.388"/><path d="M-10 70H1210V640H-10Z M-2450 644L-1658 481L-1185 387L-868 326L-638 284L-462 253L-320 229L-203 211L-104 196L-18 185L58 175L126 167L188 161L246 156L299 151L350 148L398 145L445 143L490 141L534 140L578 140L622 140L666 140L710 141L755 143L802 145L850 148L901 151L954 156L1012 161L1074 167L1142 175L1218 185L1304 196L1403 211L1520 229L1662 253L1838 284L2068 326L2385 387L2858 481L3650 644Z" fill-opacity="0.469"/><path d="M-10 70H1210V640H-10Z M-2553 644L-1699 475L-1201 379L-872 318L-635 276L-455 246L-311 223L-193 205L-92 191L-6 180L71 171L140 163L203 157L261 152L316 148L367 145L416 142L464 140L510 139L555 138L600 138L645 138L690 139L736 140L784 142L833 145L884 148L939 152L997 157L1060 163L1129 171L1206 180L1292 191L1393 205L1511 223L1655 246L1835 276L2072 318L2401 379L2899 475L3753 644Z" fill-opacity="0.590"/><path d="M-10 70H1210V640H-10Z M-2657 644L-1753 472L-1235 375L-895 314L-652 272L-467 242L-321 219L-200 202L-98 188L-10 177L67 168L137 161L201 155L259 150L314 146L366 143L415 140L463 138L509 137L555 136L600 136L645 136L691 137L737 138L785 140L834 143L886 146L941 150L999 155L1063 161L1133 168L1210 177L1298 188L1400 202L1521 219L1667 242L1852 272L2095 314L2435 375L2953 472L3857 644Z" fill-opacity="0.782"/><path d="M-10 70H1210V640H-10Z M-2760 644L-1807 468L-1268 371L-917 310L-668 269L-479 239L-330 216L-207 199L-104 185L-15 174L64 165L134 158L198 152L257 148L312 144L364 141L414 138L462 136L509 135L555 134L600 134L645 134L691 135L738 136L786 138L836 141L888 144L943 148L1002 152L1066 158L1136 165L1215 174L1304 185L1407 199L1530 216L1679 239L1868 269L2117 310L2468 371L3007 468L3960 644Z" fill-opacity="1.000"/></g>
<path d="M600.0 350.0L135.4 153.6M600.0 350.0L1064.6 153.6" stroke="#cbcbcb" stroke-width="1.2" fill="none"/>
<path d="M600.0 350.0L1296.3 644.3" stroke="#b21432" stroke-width="1.3" fill="none"/>
<path d="M600.0 350.0L-96.3 644.3" stroke="#1d58bb" stroke-width="1.3" fill="none"/>
<g fill="none" stroke-width="1.2"><path d="M29.3 591V569" stroke="#55d43a"/><path d="M29.3 591L46 597.5" stroke="#c0183a"/><path d="M29.3 591L13 598" stroke="#1c5fc6"/></g>
<path d="M27 571L29.3 566.5L31.6 571Z" fill="#55d43a"/><path d="M44 595.2L48.5 598.3L43.6 598.6Z" fill="#c0183a"/>
<path d="M7.6 597.4H12.2L7.6 603H12.2" stroke="#1c5fc6" stroke-width="1.1" fill="none"/>
<path d="M1186.4 598l4.6 6.6m0-6.6l-4.6 6.6" stroke="#b21432" stroke-width="1.1" fill="none"/>
</svg>
<div id="gscale" class="abs"></div>
<span class="t" style="left:1125.3px;top:610px;font-size:9.8px;line-height:11px;height:11px;color:#fff;transform:scaleX(0.9539);">Grid Scale: x10.0</span>
<div id="status" class="abs"></div>
<span class="t" style="left:2.2px;top:627px;font-size:9.8px;line-height:11px;height:11px;color:#222;transform:scaleX(0.8997);">L: Select</span>
<span class="t" style="left:52.2px;top:627px;font-size:9.8px;line-height:11px;height:11px;color:#222;transform:scaleX(0.9881);">M: Start camera</span>
<span class="t" style="left:136.3px;top:627px;font-size:9.8px;line-height:11px;height:11px;color:#222;transform:scaleX(0.9597);">R: Show menu</span>
<span class="t" style="left:213.4px;top:627px;font-size:9.8px;line-height:11px;height:11px;color:#222;transform:scaleX(1.0011);">[Alt]+R: Tweak menu</span>
<span class="t" style="left:1081.7px;top:627px;font-size:9.8px;line-height:11px;height:11px;color:#222;transform:scaleX(0.9835);">Tweak: Disabled</span>
<div id="dlg" class="abs"><div class="abs" style="left:-314px;top:-17px;width:1200px;height:639px">
<div id="dtitle" class="abs" style="left:314px;top:17px;width:545px"></div>
<span class="t" style="left:320.0px;top:24px;font-size:9.8px;line-height:11px;height:11px;color:#1a1a1a;transform:scaleX(0.8633);">Preferences</span>
<svg class="abs" style="left:840px;top:20px" width="16" height="16" viewBox="840 20 16 16"><path d="M843.6 24.2l7.3 7.3m0-7.3l-7.3 7.3" stroke="#222" stroke-width="1" fill="none"/></svg>
<div class="tab" style="left:320.7px;width:42.3px"></div>
<div class="tab" style="left:362px;width:44.3px"></div>
<div class="tab" style="left:405.3px;width:52.2px"></div>
<div class="tab" style="left:516.3px;width:70.0px"></div>
<div class="tab" style="left:585.3px;width:36.0px"></div>
<div id="pagebox" class="abs"></div>
<div class="tabsel" style="left:456.5px;width:60.3px"></div>
<span class="t" style="left:325.3px;top:51px;font-size:9.8px;line-height:11px;height:11px;color:#111;transform:scaleX(0.9373);">General</span>
<span class="t" style="left:368.0px;top:51px;font-size:9.8px;line-height:11px;height:11px;color:#111;transform:scaleX(0.9373);">Camera</span>
<span class="t" style="left:410.7px;top:51px;font-size:9.8px;line-height:11px;height:11px;color:#111;transform:scaleX(0.9631);">Advanced</span>
<span class="t" style="left:462.7px;top:49px;font-size:9.8px;line-height:11px;height:11px;color:#111;transform:scaleX(0.9680);">Constraints</span>
<span class="t" style="left:520.4px;top:51px;font-size:9.8px;line-height:11px;height:11px;color:#111;transform:scaleX(0.9847);">User Interface</span>
<span class="t" style="left:591.0px;top:51px;font-size:9.8px;line-height:11px;height:11px;color:#111;transform:scaleX(0.9782);">Misc</span>
<div class="gb" style="left:325.1px;top:73.3px;width:345.0px;height:381.0px"></div>
<div class="gl" style="left:330.0px;top:68.8px;width:113.0px"></div>
<span class="t" style="left:332.0px;top:69px;font-size:9.8px;line-height:11px;height:11px;color:#111;transform:scaleX(0.9873);">Default Constraint Values</span>
<div class="gb" style="left:332.9px;top:92.3px;width:160.2px;height:163.5px"></div>
<div class="gl" style="left:338.0px;top:87.8px;width:92.4px"></div>
<span class="t" style="left:340.0px;top:88px;font-size:9.8px;line-height:11px;height:11px;color:#111;transform:scaleX(0.9778);">Distance Constraints</span>
<div class="gb" style="left:500.2px;top:93.9px;width:160.8px;height:164.2px"></div>
<div class="gl" style="left:505.7px;top:89.4px;width:86.6px"></div>
<span class="t" style="left:507.7px;top:90px;font-size:9.8px;line-height:11px;height:11px;color:#111;transform:scaleX(0.9722);">Alternate Distances</span>
<div class="gb" style="left:332.9px;top:265.9px;width:160.2px;height:163.8px"></div>
<div class="gl" style="left:337.8px;top:261.4px;width:60.8px"></div>
<span class="t" style="left:339.8px;top:262px;font-size:9.8px;line-height:11px;height:11px;color:#111;transform:scaleX(0.9478);">Scale Factors</span>
<div class="gb" style="left:500.2px;top:267.1px;width:160.8px;height:163.9px"></div>
<div class="gl" style="left:505.7px;top:262.6px;width:91.6px"></div>
<span class="t" style="left:507.7px;top:263px;font-size:9.8px;line-height:11px;height:11px;color:#111;transform:scaleX(0.9866);">Rotation Constraints</span>
<div class="gb" style="left:673.3px;top:73.3px;width:145.6px;height:380.6px"></div>
<div class="gl" style="left:678.0px;top:68.8px;width:118.3px"></div>
<span class="t" style="left:680.0px;top:69px;font-size:9.8px;line-height:11px;height:11px;color:#111;transform:scaleX(0.9715);">Set Constraint Preferences</span>
<div class="gb" style="left:678.1px;top:89.1px;width:135.8px;height:79.5px"></div>
<div class="gl" style="left:683.5px;top:84.6px;width:97.8px"></div>
<span class="t" style="left:685.5px;top:85px;font-size:9.8px;line-height:11px;height:11px;color:#111;transform:scaleX(1.0070);">Default Modifier Keys</span>
<div class="gb" style="left:679.8px;top:180.2px;width:132.4px;height:67.6px"></div>
<div class="gl" style="left:684.7px;top:175.7px;width:94.9px"></div>
<span class="t" style="left:686.7px;top:176px;font-size:9.8px;line-height:11px;height:11px;color:#111;transform:scaleX(0.9702);">Save Constraints to...</span>
<div class="gb" style="left:683.3px;top:193.9px;width:125.2px;height:50.1px"></div>
<span class="t" style="left:338.5px;top:106px;font-size:9.8px;line-height:11px;height:11px;color:#111;transform:scaleX(0.9810);">Alt</span>
<div class="in" style="left:402.4px;top:102.5px;border-bottom-color:transparent"></div>
<div class="abs" style="left:402.0px;top:119.1px;width:84.4px;height:1.9px;background:#0f64c0;border-radius:0 0 2px 2px"></div>
<div class="abs" style="left:405.79999999999995px;top:104.0px;width:18.3px;height:12.6px;background:#0a64cf"></div>
<div class="abs" style="left:424.09999999999997px;top:104.0px;width:0.9px;height:12.6px;background:#d08a3a"></div>
<span class="t" style="left:406.4px;top:106px;font-size:9.8px;line-height:11px;height:11px;color:#fff;transform:scaleX(0.9239);">10.0</span>
<span class="t" style="left:338.5px;top:128px;font-size:9.8px;line-height:11px;height:11px;color:#111;transform:scaleX(0.9439);">Shift</span>
<div class="in" style="left:402.4px;top:124.3px"></div>
<span class="t" style="left:406.4px;top:128px;font-size:9.8px;line-height:11px;height:11px;color:#111;transform:scaleX(0.9132);">1.0</span>
<span class="t" style="left:338.5px;top:150px;font-size:9.8px;line-height:11px;height:11px;color:#111;transform:scaleX(0.9712);">Ctrl</span>
<div class="in" style="left:402.4px;top:146.1px"></div>
<span class="t" style="left:406.4px;top:150px;font-size:9.8px;line-height:11px;height:11px;color:#111;transform:scaleX(0.9132);">0.1</span>
<span class="t" style="left:338.5px;top:171px;font-size:9.8px;line-height:11px;height:11px;color:#111;transform:scaleX(0.9908);">Ctrl+Shift</span>
<div class="in" style="left:402.4px;top:167.8px"></div>
<span class="t" style="left:406.4px;top:171px;font-size:9.8px;line-height:11px;height:11px;color:#111;transform:scaleX(0.9239);">0.01</span>
<span class="t" style="left:338.5px;top:193px;font-size:9.8px;line-height:11px;height:11px;color:#111;transform:scaleX(1.0158);">Ctrl+Alt</span>
<div class="in" style="left:402.4px;top:189.6px"></div>
<span class="t" style="left:406.4px;top:193px;font-size:9.8px;line-height:11px;height:11px;color:#111;transform:scaleX(0.9279);">0.001</span>
<span class="t" style="left:338.5px;top:215px;font-size:9.8px;line-height:11px;height:11px;color:#111;transform:scaleX(0.9959);">Shift+Alt</span>
<div class="in" style="left:402.4px;top:211.4px"></div>
<span class="t" style="left:406.4px;top:215px;font-size:9.8px;line-height:11px;height:11px;color:#111;transform:scaleX(0.9239);">0.25</span>
<span class="t" style="left:338.5px;top:237px;font-size:9.8px;line-height:11px;height:11px;color:#111;transform:scaleX(1.0100);">Ctrl+Shift+Alt</span>
<div class="in" style="left:402.4px;top:233.2px"></div>
<span class="t" style="left:406.4px;top:237px;font-size:9.8px;line-height:11px;height:11px;color:#111;transform:scaleX(0.9279);">0.025</span>
<span class="t" style="left:505.8px;top:108px;font-size:9.8px;line-height:11px;height:11px;color:#111;transform:scaleX(0.9810);">Alt</span>
<div class="in" style="left:569.8px;top:104.3px"></div>
<span class="t" style="left:573.8px;top:108px;font-size:9.8px;line-height:11px;height:11px;color:#111;transform:scaleX(0.9370);">0.015625</span>
<span class="t" style="left:505.8px;top:130px;font-size:9.8px;line-height:11px;height:11px;color:#111;transform:scaleX(0.9439);">Shift</span>
<div class="in" style="left:569.8px;top:126.1px"></div>
<span class="t" style="left:573.8px;top:130px;font-size:9.8px;line-height:11px;height:11px;color:#111;transform:scaleX(0.9239);">0.25</span>
<span class="t" style="left:505.8px;top:151px;font-size:9.8px;line-height:11px;height:11px;color:#111;transform:scaleX(0.9712);">Ctrl</span>
<div class="in" style="left:569.8px;top:147.9px"></div>
<span class="t" style="left:573.8px;top:151px;font-size:9.8px;line-height:11px;height:11px;color:#111;transform:scaleX(0.9279);">0.125</span>
<span class="t" style="left:505.8px;top:173px;font-size:9.8px;line-height:11px;height:11px;color:#111;transform:scaleX(0.9908);">Ctrl+Shift</span>
<div class="in" style="left:569.8px;top:169.6px"></div>
<span class="t" style="left:573.8px;top:173px;font-size:9.8px;line-height:11px;height:11px;color:#111;transform:scaleX(0.9349);">0.03125</span>
<span class="t" style="left:505.8px;top:195px;font-size:9.8px;line-height:11px;height:11px;color:#111;transform:scaleX(1.0158);">Ctrl+Alt</span>
<div class="in" style="left:569.8px;top:191.4px"></div>
<span class="t" style="left:573.8px;top:195px;font-size:9.8px;line-height:11px;height:11px;color:#111;transform:scaleX(0.9279);">0.625</span>
<span class="t" style="left:505.8px;top:217px;font-size:9.8px;line-height:11px;height:11px;color:#111;transform:scaleX(0.9959);">Shift+Alt</span>
<div class="in" style="left:569.8px;top:213.2px"></div>
<span class="t" style="left:573.8px;top:217px;font-size:9.8px;line-height:11px;height:11px;color:#111;transform:scaleX(0.9320);">0.0625</span>
<span class="t" style="left:505.8px;top:238px;font-size:9.8px;line-height:11px;height:11px;color:#111;transform:scaleX(1.0100);">Ctrl+Shift+Alt</span>
<div class="in" style="left:569.8px;top:235.0px"></div>
<span class="t" style="left:573.8px;top:238px;font-size:9.8px;line-height:11px;height:11px;color:#111;transform:scaleX(0.9370);">0.046875</span>
<span class="t" style="left:338.5px;top:279px;font-size:9.8px;line-height:11px;height:11px;color:#111;transform:scaleX(0.9810);">Alt</span>
<div class="in" style="left:402.4px;top:275.8px"></div>
<span class="t" style="left:406.4px;top:279px;font-size:9.8px;line-height:11px;height:11px;color:#111;transform:scaleX(0.9239);">10.0</span>
<span class="t" style="left:338.5px;top:301px;font-size:9.8px;line-height:11px;height:11px;color:#111;transform:scaleX(0.9439);">Shift</span>
<div class="in" style="left:402.4px;top:297.6px"></div>
<span class="t" style="left:406.4px;top:301px;font-size:9.8px;line-height:11px;height:11px;color:#111;transform:scaleX(0.9132);">1.0</span>
<span class="t" style="left:338.5px;top:323px;font-size:9.8px;line-height:11px;height:11px;color:#111;transform:scaleX(0.9712);">Ctrl</span>
<div class="in" style="left:402.4px;top:319.4px"></div>
<span class="t" style="left:406.4px;top:323px;font-size:9.8px;line-height:11px;height:11px;color:#111;transform:scaleX(0.9132);">0.1</span>
<span class="t" style="left:338.5px;top:345px;font-size:9.8px;line-height:11px;height:11px;color:#111;transform:scaleX(0.9908);">Ctrl+Shift</span>
<div class="in" style="left:402.4px;top:341.1px"></div>
<span class="t" style="left:406.4px;top:345px;font-size:9.8px;line-height:11px;height:11px;color:#111;transform:scaleX(0.9239);">0.01</span>
<span class="t" style="left:338.5px;top:366px;font-size:9.8px;line-height:11px;height:11px;color:#111;transform:scaleX(1.0158);">Ctrl+Alt</span>
<div class="in" style="left:402.4px;top:362.9px"></div>
<span class="t" style="left:406.4px;top:366px;font-size:9.8px;line-height:11px;height:11px;color:#111;transform:scaleX(0.9279);">0.001</span>
<span class="t" style="left:338.5px;top:388px;font-size:9.8px;line-height:11px;height:11px;color:#111;transform:scaleX(0.9959);">Shift+Alt</span>
<div class="in" style="left:402.4px;top:384.7px"></div>
<span class="t" style="left:406.4px;top:388px;font-size:9.8px;line-height:11px;height:11px;color:#111;transform:scaleX(0.9239);">0.25</span>
<span class="t" style="left:338.5px;top:410px;font-size:9.8px;line-height:11px;height:11px;color:#111;transform:scaleX(1.0100);">Ctrl+Shift+Alt</span>
<div class="in" style="left:402.4px;top:406.5px"></div>
<span class="t" style="left:406.4px;top:410px;font-size:9.8px;line-height:11px;height:11px;color:#111;transform:scaleX(0.9279);">0.025</span>
<span class="t" style="left:505.8px;top:281px;font-size:9.8px;line-height:11px;height:11px;color:#111;transform:scaleX(0.9810);">Alt</span>
<div class="in" style="left:569.8px;top:277.8px"></div>
<span class="t" style="left:573.8px;top:281px;font-size:9.8px;line-height:11px;height:11px;color:#111;transform:scaleX(0.9279);">180.0</span>
<span class="t" style="left:505.8px;top:303px;font-size:9.8px;line-height:11px;height:11px;color:#111;transform:scaleX(0.9439);">Shift</span>
<div class="in" style="left:569.8px;top:299.6px"></div>
<span class="t" style="left:573.8px;top:303px;font-size:9.8px;line-height:11px;height:11px;color:#111;transform:scaleX(0.9239);">15.0</span>
<span class="t" style="left:505.8px;top:325px;font-size:9.8px;line-height:11px;height:11px;color:#111;transform:scaleX(0.9712);">Ctrl</span>
<div class="in" style="left:569.8px;top:321.4px"></div>
<span class="t" style="left:573.8px;top:325px;font-size:9.8px;line-height:11px;height:11px;color:#111;transform:scaleX(0.9132);">1.0</span>
<span class="t" style="left:505.8px;top:347px;font-size:9.8px;line-height:11px;height:11px;color:#111;transform:scaleX(0.9908);">Ctrl+Shift</span>
<div class="in" style="left:569.8px;top:343.1px"></div>
<span class="t" style="left:573.8px;top:347px;font-size:9.8px;line-height:11px;height:11px;color:#111;transform:scaleX(0.9132);">0.1</span>
<span class="t" style="left:505.8px;top:368px;font-size:9.8px;line-height:11px;height:11px;color:#111;transform:scaleX(1.0158);">Ctrl+Alt</span>
<div class="in" style="left:569.8px;top:364.9px"></div>
<span class="t" style="left:573.8px;top:368px;font-size:9.8px;line-height:11px;height:11px;color:#111;transform:scaleX(0.9239);">22.5</span>
<span class="t" style="left:505.8px;top:390px;font-size:9.8px;line-height:11px;height:11px;color:#111;transform:scaleX(0.9959);">Shift+Alt</span>
<div class="in" style="left:569.8px;top:386.7px"></div>
<span class="t" style="left:573.8px;top:390px;font-size:9.8px;line-height:11px;height:11px;color:#111;transform:scaleX(0.9279);">135.0</span>
<span class="t" style="left:505.8px;top:412px;font-size:9.8px;line-height:11px;height:11px;color:#111;transform:scaleX(1.0100);">Ctrl+Shift+Alt</span>
<div class="in" style="left:569.8px;top:408.5px"></div>
<span class="t" style="left:573.8px;top:412px;font-size:9.8px;line-height:11px;height:11px;color:#111;transform:scaleX(0.9279);">144.0</span>
<span class="t" style="left:685.5px;top:105px;font-size:9.8px;line-height:11px;height:11px;color:#111;transform:scaleX(0.9470);">Distance</span>
<div class="cb" style="left:727.3px;top:100.8px"></div>
<span class="t" style="left:730.2px;top:106px;font-size:9.8px;line-height:11px;height:11px;color:#111;transform:scaleX(0.9810);">Alt</span>
<svg class="abs" style="left:795px;top:105.8px" width="9" height="8" viewBox="0 0 9 8"><path d="M1.3 2.3L4.5 5.4L7.7 2.3" stroke="#5a5a5a" stroke-width="0.9" fill="none"/></svg>
<span class="t" style="left:685.5px;top:126px;font-size:9.8px;line-height:11px;height:11px;color:#111;transform:scaleX(0.9944);">Rotation</span>
<div class="cb" style="left:727.3px;top:122.5px"></div>
<span class="t" style="left:730.2px;top:127px;font-size:9.8px;line-height:11px;height:11px;color:#111;transform:scaleX(0.9810);">Alt</span>
<svg class="abs" style="left:795px;top:127.5px" width="9" height="8" viewBox="0 0 9 8"><path d="M1.3 2.3L4.5 5.4L7.7 2.3" stroke="#5a5a5a" stroke-width="0.9" fill="none"/></svg>
<span class="t" style="left:685.5px;top:148px;font-size:9.8px;line-height:11px;height:11px;color:#111;transform:scaleX(0.8898);">Scale</span>
<div class="cb" style="left:727.3px;top:144.3px"></div>
<span class="t" style="left:730.2px;top:149px;font-size:9.8px;line-height:11px;height:11px;color:#111;transform:scaleX(0.9810);">Alt</span>
<svg class="abs" style="left:795px;top:149.3px" width="9" height="8" viewBox="0 0 9 8"><path d="M1.3 2.3L4.5 5.4L7.7 2.3" stroke="#5a5a5a" stroke-width="0.9" fill="none"/></svg>
<div class="abs" style="left:688.1px;top:206.2px;width:9.2px;height:9.2px;border-radius:50%;background:#0a61c2"></div>
<div class="abs" style="left:690.8px;top:208.9px;width:3.8px;height:3.8px;border-radius:50%;background:#fff"></div>
<div class="abs" style="left:688.1px;top:224.8px;width:9.2px;height:9.2px;border-radius:50%;background:#f3f3f3;border:1px solid #7d7d7d"></div>
<span class="t" style="left:700.6px;top:206px;font-size:9.8px;line-height:11px;height:11px;color:#111;transform:scaleX(0.9712);">Distance Constraints</span>
<span class="t" style="left:700.6px;top:225px;font-size:9.8px;line-height:11px;height:11px;color:#111;transform:scaleX(0.9733);">Alternate Distances</span>
<div class="abs" style="left:679px;top:254.3px;width:9px;height:9.3px;border-radius:2px;background:#f6f6f6;border:1px solid #7d7d7d"></div>
<span class="t" style="left:690.7px;top:254px;font-size:9.8px;line-height:11px;height:11px;color:#111;transform:scaleX(0.9862);">Use Alternate Constraints</span>
<span class="t" style="left:329.0px;top:440px;font-size:9.8px;line-height:11px;height:11px;color:#111;transform:scaleX(1.0176);">Deleting value or entering '0' resets constraint to Wings default</span>
<div class="btn" style="left:734.2px;top:612.3px;width:54.6px;border:1.1px solid #2a82dc"></div>
<div class="btn" style="left:796.3px;top:612.3px;width:54.3px"></div>
<span class="t" style="left:754.5px;top:616px;font-size:9.8px;line-height:11px;height:11px;color:#111;transform:scaleX(0.9392);">OK</span>
<span class="t" style="left:809.2px;top:616px;font-size:9.8px;line-height:11px;height:11px;color:#111;transform:scaleX(0.9270);">Cancel</span>
<svg class="abs" style="left:850px;top:625px" width="8" height="8" viewBox="0 0 8 8" fill="#b5b5b5"><rect x="5.6" y="1" width="1.2" height="1.2"/><rect x="3.4" y="3.2" width="1.2" height="1.2"/><rect x="5.6" y="3.2" width="1.2" height="1.2"/><rect x="1.2" y="5.4" width="1.2" height="1.2"/><rect x="3.4" y="5.4" width="1.2" height="1.2"/><rect x="5.6" y="5.4" width="1.2" height="1.2"/></svg>
</div></div>
</body></html>
